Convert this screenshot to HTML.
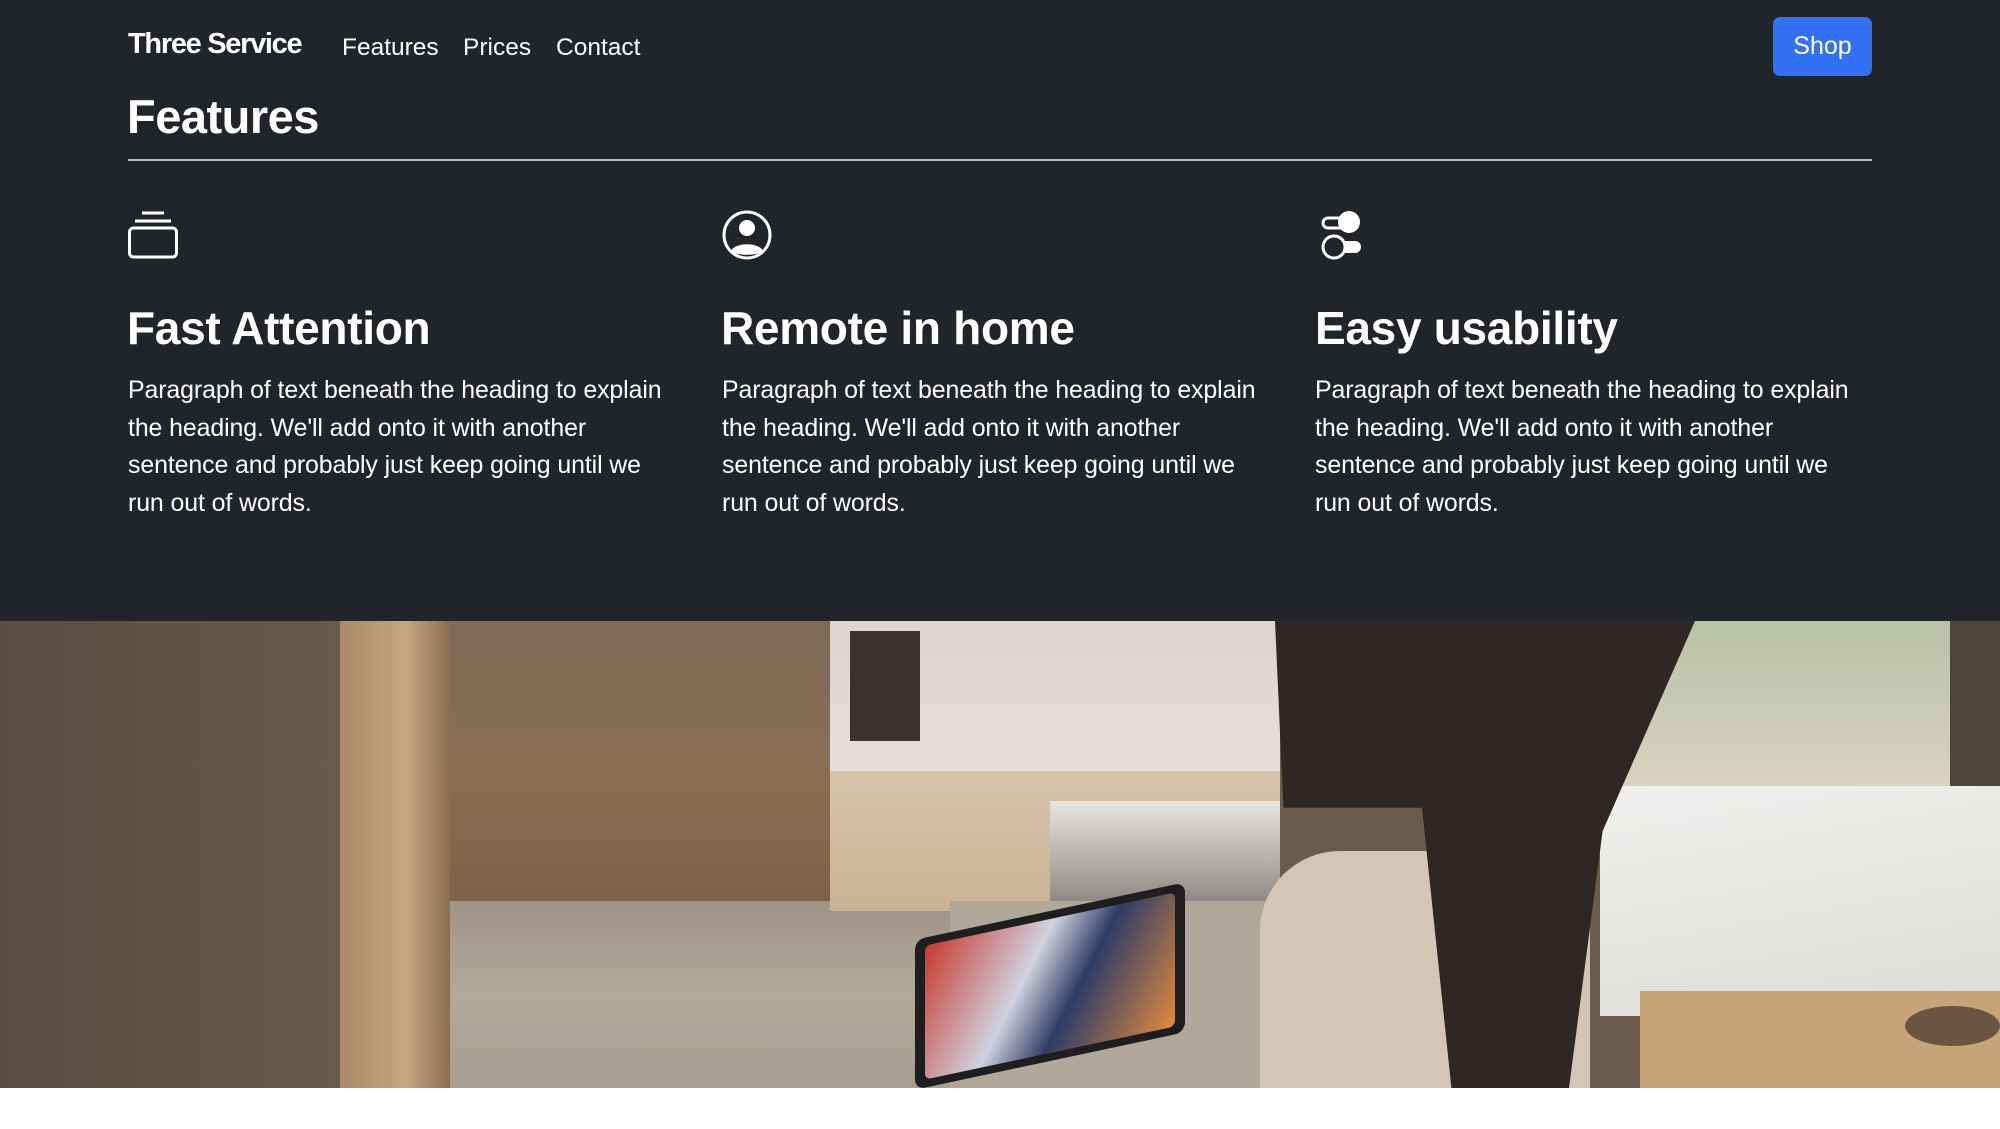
<!DOCTYPE html>
<html><head><meta charset="utf-8"><style>
*{margin:0;padding:0;box-sizing:border-box}
body{width:2000px;height:1129px;background:#fff;font-family:"Liberation Sans",Arial,sans-serif;overflow:hidden;position:relative}
.dark{position:absolute;left:0;top:0;width:2000px;height:621px;background:#212529;color:#fff}
.a{position:absolute;white-space:nowrap}
.brand{left:128px;top:28px;font-size:29px;letter-spacing:-1.3px;font-weight:bold}
.nav{top:34px;font-size:24.5px}
.shop{left:1773px;top:17px;width:99px;height:59px;background:#3370f5;border-radius:7px;font-size:25px;line-height:59px;text-align:center}
.title{left:127px;top:89px;font-size:47px;letter-spacing:-.5px;font-weight:bold}
.hr{left:128px;top:159px;width:1744px;height:2px;background:#b8babc}
.h3{top:301px;font-size:46px;letter-spacing:-.3px;font-weight:bold}
.p{top:372px;font-size:24.9px;line-height:37.5px;letter-spacing:-.1px}
.img{position:absolute;left:0;top:621px;width:2000px;height:467px;overflow:hidden;background:#6b5b4a}
.img div{position:absolute}
</style></head><body>
<div class="dark">
<div class="a brand">Three Service</div>
<div class="a nav" style="left:342px">Features</div>
<div class="a nav" style="left:463px">Prices</div>
<div class="a nav" style="left:556px">Contact</div>
<div class="a shop">Shop</div>
<div class="a title">Features</div>
<div class="a hr"></div>

<svg class="a" style="left:128px;top:211px" width="50" height="48" viewBox="0 0 50 48" fill="none" stroke="#fff" stroke-width="3"><line x1="14" y1="2" x2="36" y2="2"/><line x1="7" y1="10" x2="43" y2="10"/><rect x="1.5" y="17" width="47" height="29" rx="4"/></svg>
<svg class="a" style="left:722px;top:210px" width="50" height="50" viewBox="0 0 50 50"><circle cx="25" cy="25" r="23" fill="none" stroke="#fff" stroke-width="3"/><circle cx="25" cy="18" r="8" fill="#fff"/><path d="M9 41 C13 32 37 32 41 41 C36 46 14 46 9 41Z" fill="#fff"/></svg>
<svg class="a" style="left:1320px;top:210px" width="42" height="50" viewBox="0 0 42 50" fill="none" stroke="#fff" stroke-width="3"><rect x="3" y="8" width="24" height="10" rx="5"/><circle cx="29" cy="12" r="11" fill="#fff" stroke="none"/><rect x="15" y="31" width="26" height="12" rx="6" fill="#fff" stroke="none"/><circle cx="14" cy="37" r="11" fill="#212529"/></svg>

<div class="a h3" style="left:127px">Fast Attention</div>
<div class="a h3" style="left:721px">Remote in home</div>
<div class="a h3" style="left:1315px">Easy usability</div>
<div class="a p" style="left:128px">Paragraph of text beneath the heading to explain<br>the heading. We'll add onto it with another<br>sentence and probably just keep going until we<br>run out of words.</div>
<div class="a p" style="left:722px">Paragraph of text beneath the heading to explain<br>the heading. We'll add onto it with another<br>sentence and probably just keep going until we<br>run out of words.</div>
<div class="a p" style="left:1315px">Paragraph of text beneath the heading to explain<br>the heading. We'll add onto it with another<br>sentence and probably just keep going until we<br>run out of words.</div>
</div>

<div class="img">
<div style="left:0;top:0;width:360px;height:467px;background:linear-gradient(90deg,#5a4d40,#6a5a49)"></div>
<div style="left:340px;top:0;width:110px;height:467px;background:linear-gradient(90deg,#a88a68,#c7a682 60%,#8a6e52)"></div>
<div style="left:450px;top:0;width:380px;height:300px;background:linear-gradient(180deg,#7d6a57,#8a6f55 50%,#7a6048)"></div>
<div style="left:450px;top:280px;width:500px;height:187px;background:linear-gradient(180deg,#9e9386,#b3a999 50%,#a89e90)"></div>
<div style="left:830px;top:0;width:450px;height:190px;background:linear-gradient(180deg,#ddd5cc,#e8e2da)"></div>
<div style="left:830px;top:150px;width:450px;height:140px;background:linear-gradient(180deg,#d6c4ac,#c9b394)"></div>
<div style="left:850px;top:10px;width:70px;height:110px;background:#3a322c"></div>
<div style="left:1050px;top:180px;width:230px;height:100px;background:linear-gradient(180deg,#e9e7e3,#8f8a83)"></div>
<div style="left:950px;top:280px;width:370px;height:187px;background:#b2a899"></div>
<div style="left:1588px;top:0;width:365px;height:170px;background:linear-gradient(180deg,#b9c2a6,#d9d3c0)"></div>
<div style="left:1950px;top:0;width:50px;height:180px;background:#4d443a"></div>
<div style="left:1600px;top:165px;width:400px;height:230px;background:linear-gradient(170deg,#f0f0ee,#dedcd8)"></div>
<div style="left:1640px;top:370px;width:360px;height:97px;background:#c6a477"></div>
<div style="left:1905px;top:385px;width:95px;height:40px;border-radius:50%;background:#6b5542"></div>
<div style="left:1260px;top:230px;width:330px;height:237px;background:#d3c6b4;border-radius:80px 0 0 0"></div>
<div style="left:1275px;top:0;width:420px;height:467px;background:#2f2723;clip-path:polygon(0 0,100% 0,78% 45%,70% 100%,42% 100%,35% 40%,2% 40%)"></div>
<div style="left:915px;top:290px;width:270px;height:150px;background:#1e1e20;transform:skewY(-12deg);border-radius:10px"></div>
<div style="left:925px;top:298px;width:250px;height:134px;background:linear-gradient(120deg,#c7392f,#cfd3de 40%,#2d3c66 60%,#e08a3c);transform:skewY(-12deg);border-radius:6px"></div>
</div>
</body></html>
